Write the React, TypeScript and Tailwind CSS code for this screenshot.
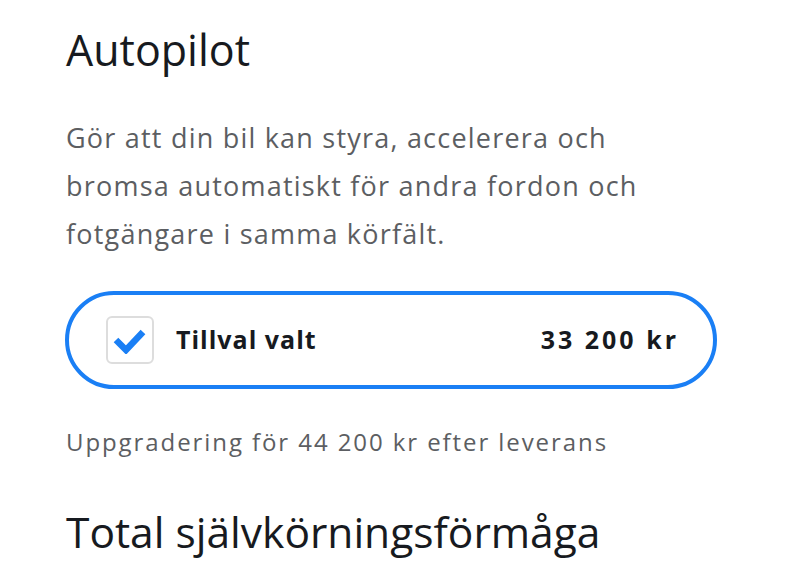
export default function App() {
  return (
    <div className="h-[588px] w-[808px] overflow-hidden bg-white pl-[65px] pr-[91px] pt-[26px]" style={{ fontFamily: '"Open Sans", "Liberation Sans", sans-serif' }}>
      <h2 className="pl-px text-[43px] leading-[48px] text-[#171a20]">Autopilot</h2>
      <p className="mt-[40px] max-w-[600px] pl-px text-[27px] leading-[48px] tracking-[0.045em] text-[#5c5e62]">
        Gör att din bil kan styra, accelerera och bromsa automatiskt för andra fordon och fotgängare i samma körfält.
      </p>
      <div className="mt-[33px] flex h-[98px] items-center rounded-full border-4 border-[#1a7ff5] pl-[37px] pr-[34px]">
        <div className="flex h-[48px] w-[48px] items-center justify-center rounded-md border-2 border-[#dddddd]">
          <svg width="34" height="28" viewBox="0 0 34 28">
            <path d="M3 14 L13 24 L30 6" fill="none" stroke="#1a7ff5" strokeWidth="6.5" strokeLinejoin="miter" />
          </svg>
        </div>
        <span className="ml-[22px] text-[25px] font-bold tracking-[1px] text-[#171a20]">Tillval valt</span>
        <span className="ml-auto text-[25px] font-bold tracking-[3px] text-[#171a20]">33 200 kr</span>
      </div>
      <p className="mt-[37px] pl-px text-[24px] leading-[32px] tracking-[0.08em] text-[#5c5e62]">Uppgradering för 44 200 kr efter leverans</p>
      <h2 className="mt-[50px] pl-px text-[42.5px] leading-[48px] text-[#171a20]">Total självkörningsförmåga</h2>
    </div>
  );
}
